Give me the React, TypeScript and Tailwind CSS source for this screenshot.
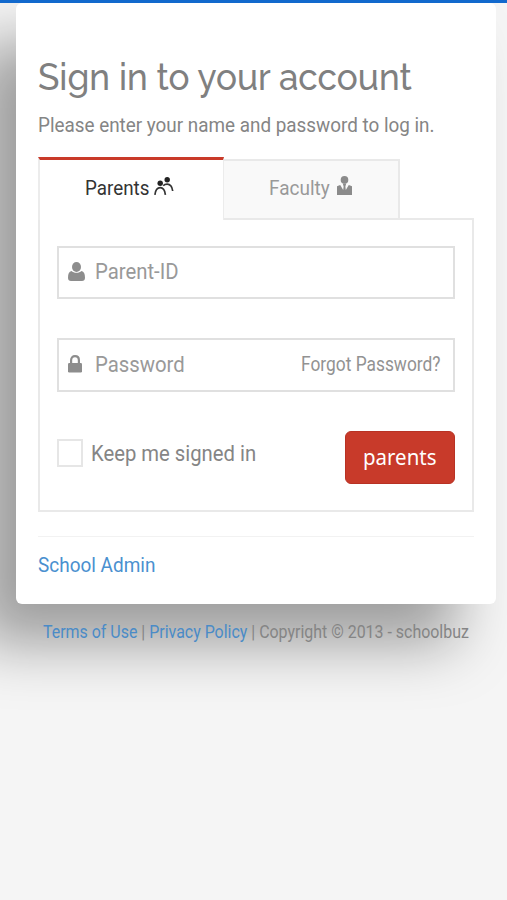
import type { ReactNode } from "react";

function Label({ className, children }: { className: string; children: ReactNode }) {
  return <span className={"block origin-left whitespace-nowrap " + className}>{children}</span>;
}

function ParentsIcon() {
  return (
    <svg width="20" height="19" viewBox="0 0 20 19" fill="none" stroke="#333" strokeWidth="1.7">
      <circle cx="6.2" cy="6.2" r="2.7" fill="#222" stroke="none" />
      <circle cx="13.2" cy="2.8" r="2.7" fill="#222" stroke="none" />
      <path d="M.9 17.8 C1.5 13 3.2 10.7 6.2 10.7 C9.2 10.7 10.8 13 11.4 17.8" />
      <path d="M9.2 8.8 C10.2 7.7 11.5 7.2 13.2 7.2 C16.3 7.2 18.1 9.3 18.7 14" />
    </svg>
  );
}

function FacultyIcon() {
  return (
    <svg width="15" height="20" viewBox="0 0 15 20" fill="#8b8b8b">
      <circle cx="7.5" cy="3.9" r="3.8" />
      <path d="M0 19 V10.2 L3.2 9 L6.2 14 L6.6 10.5 L5.8 7.4 H9.2 L8.4 10.5 L8.8 14 L11.8 9 L15 10.2 V19 Z" />
    </svg>
  );
}

function UserIcon() {
  return (
    <svg width="17" height="20" viewBox="0 0 17 20" fill="#8d8d8d">
      <ellipse cx="8.5" cy="5" rx="4.5" ry="4.9" />
      <path d="M3.5 8.9 C4.7 10 6.4 10.7 8.5 10.7 C10.6 10.7 12.3 10 13.5 8.9 C15.9 9.4 17 11.6 17 15.7 C17 17.8 15.8 19 14 19 H3 C1.2 19 0 17.8 0 15.7 C0 11.6 1.1 9.4 3.5 8.9 Z" />
    </svg>
  );
}

function LockIcon() {
  return (
    <svg width="14" height="18" viewBox="0 0 14 18">
      <path d="M3.1 9 V5.2 C3.1 2.6 4.7 1.2 7 1.2 C9.3 1.2 10.9 2.6 10.9 5.2 V9" fill="none" stroke="#8d8d8d" strokeWidth="2.2" />
      <rect x="0" y="8" width="14" height="9.5" rx="1.2" fill="#8d8d8d" />
    </svg>
  );
}

export default function App() {
  return (
    <div className="h-[900px] w-[507px] overflow-hidden bg-[#f5f5f5] font-['Roboto',sans-serif] text-[#858585]">
      <div className="relative z-10 h-[3px] bg-[#1269cd]" />
      <main className="ml-4 h-[601px] w-[480px] rounded-md bg-white px-[22px] pt-[53px] shadow-[-40px_40px_60px_rgba(0,0,0,0.36)]">
        <h1 className="h-[43px] leading-[43px]">
          <Label className="scale-x-[0.948] font-['Raleway','Lato',sans-serif] text-[37px] font-medium text-[#808080]">Sign in to your account</Label>
        </h1>
        <p className="mt-[10px] h-8 leading-8">
          <Label className="scale-x-[0.943] text-[20px]">Please enter your name and password to log in.</Label>
        </p>

        <div className="relative z-10 mt-[16px] flex h-[63px] items-start">
          <div className="flex h-[63px] w-[186px] border-r border-l-2 border-t-[3px] border-x-[#ececec] border-t-[#c93a29] bg-white pl-[45px] text-[#333]">
            <div className="h-[58px] w-[69px] leading-[56px]">
              <Label className="scale-x-[0.94] text-[20px]">Parents</Label>
            </div>
            <div className="pt-[17px]"><ParentsIcon /></div>
          </div>
          <div className="mt-[2px] flex h-[61px] w-[176px] border-y-2 border-r-2 border-[#e9e9e9] bg-[#f9f9f9] pl-[45px] text-[#999]">
            <div className="h-[56px] w-[68px] leading-[54px]">
              <Label className="scale-x-[0.95] text-[20px]">Faculty</Label>
            </div>
            <div className="pt-[15px]"><FacultyIcon /></div>
          </div>
        </div>

        <section className="-mt-[2px] h-[294px] w-[436px] border-2 border-[#e9e9e9] px-[17px] pt-[26px]">
          <div className="flex h-[53px] items-center border-2 border-[#e0e0e0] pl-[9px]">
            <div className="-mt-px"><UserIcon /></div>
            <div className="ml-[10px] h-[49px] leading-[48px]">
              <Label className="scale-x-[0.945] text-[21.5px] text-[#999]">Parent-ID</Label>
            </div>
          </div>
          <div className="mt-[39px] flex h-[54px] items-center border-2 border-[#e0e0e0] pl-[9px]">
            <div className="-mt-[3px]"><LockIcon /></div>
            <div className="ml-[13px] w-[206px] leading-[50px]">
              <Label className="scale-x-[0.945] text-[21.5px] text-[#999]">Password</Label>
            </div>
            <div className="w-[140px] leading-[52px]">
              <Label className="scale-x-[0.89] text-[19.5px] text-[#929292]">Forgot Password?</Label>
            </div>
          </div>
          <div className="mt-[39px] flex">
            <div className="mt-2 h-[28px] w-[26px] border-2 border-[#e6e6e6]" />
            <div className="ml-[8px] h-[45px] w-[254px] leading-[45px]">
              <Label className="scale-x-[0.942] text-[21.5px]">Keep me signed in</Label>
            </div>
            <button className="h-[53px] w-[110px] rounded-md border border-[#b83224] bg-[#c83a2a] pl-[17px] text-left text-white">
              <Label className="-mt-[3px] scale-x-[0.93] font-['Noto_Sans',sans-serif] text-[22px]">parents</Label>
            </button>
          </div>
        </section>

        <hr className="mt-6 w-[436px] border-t border-[#f2f2f2]" />
        <a className="mt-[9px] block h-[38px] leading-[38px] text-[#4a90cf]">
          <Label className="scale-x-[0.925] text-[20.5px]">School Admin</Label>
        </a>
      </main>
      <footer className="relative mt-[12px] h-8 pl-[43px] leading-8">
        <Label className="scale-x-[0.911] text-[17.5px]">
          <a className="text-[#4a8bc7]">Terms of Use</a> | <a className="text-[#4a8bc7]">Privacy Policy</a> | Copyright © 2013 - schoolbuz
        </Label>
      </footer>
    </div>
  );
}
